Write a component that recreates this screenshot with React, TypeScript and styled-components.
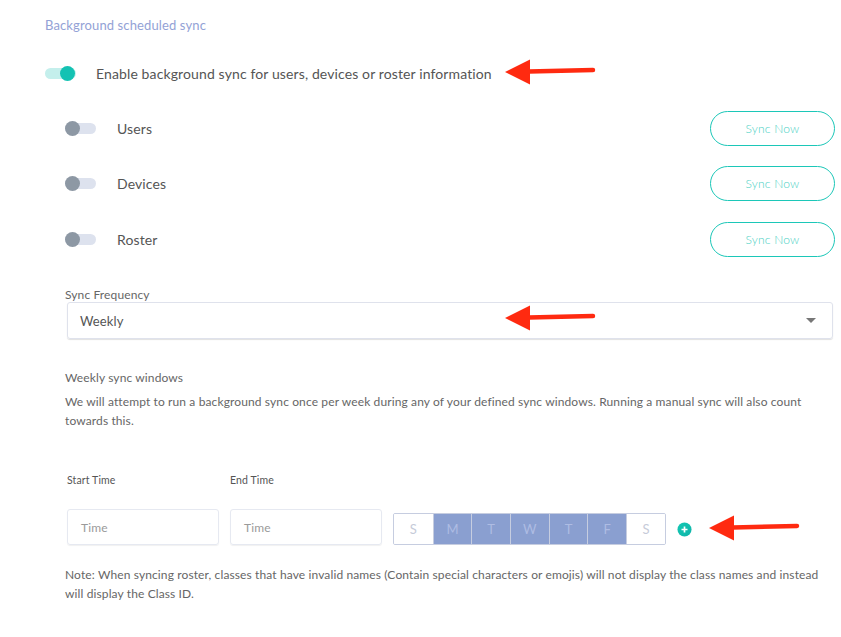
import React from "react";
import styled, { createGlobalStyle } from "styled-components";

const Global = createGlobalStyle`
  html, body { margin: 0; padding: 0; background: #fff; }
  body { font-family: "Lato", "Open Sans", sans-serif; color: #555; letter-spacing: 0.12px; }
  * { box-sizing: border-box; }
`;

const Page = styled.div`
  position: relative;
  width: 841px;
  height: 637px;
  padding: 17px 0 0 45px;
`;

const Heading = styled.div`
  font-size: 13px;
  color: #93a2d6;
  height: 16px;
  line-height: 16px;
`;

const MainRow = styled.div`
  display: flex;
  align-items: center;
  margin-top: 24px;
  height: 32px;
  gap: 20px;
`;

const MainLabel = styled.div`
  font-size: 14px;
  color: #555;
`;

const Track = styled.div<{ $on?: boolean }>`
  position: relative;
  width: 31px;
  height: 11px;
  border-radius: 6px;
  background: ${(p) => (p.$on ? "#c4efec" : "#dde2ee")};
  flex: none;
`;

const Knob = styled.div<{ $on?: boolean }>`
  position: absolute;
  top: -2px;
  left: ${(p) => (p.$on ? "15px" : "0px")};
  width: 15px;
  height: 15px;
  border-radius: 50%;
  background: ${(p) => (p.$on ? "#14c2b3" : "#8d98a4")};
`;

const SubList = styled.div`
  display: flex;
  flex-direction: column;
  gap: 21.5px;
  margin-top: 22px;
  padding-left: 20px;
  width: 790px;
`;

const SubRow = styled.div`
  display: flex;
  align-items: center;
  height: 34px;
`;

const SubLabel = styled.div`
  margin-left: 21px;
  font-size: 14px;
  color: #555;
  flex: 1;
`;

const SyncButton = styled.button`
  width: 125px;
  height: 35px;
  border-radius: 18px;
  border: 1px solid #1cc7b8;
  background: #fff;
  color: #46cfc3;
  font-family: "Lato", sans-serif;
  font-weight: 300;
  font-size: 12px;
  letter-spacing: 0.2px;
  cursor: pointer;
`;

const FreqBlock = styled.div`
  margin-top: 32px;
  padding-left: 20px;
`;

const SmallLabel = styled.div`
  font-size: 12px;
  color: #666;
  line-height: 14px;
`;

const SelectBox = styled.div`
  margin-top: 0px;
  margin-left: 2px;
  width: 766px;
  height: 37px;
  border: 1px solid #dfe2ec;
  border-radius: 3px;
  box-shadow: 0 1px 1px rgba(0, 0, 0, 0.12);
  display: flex;
  align-items: center;
  justify-content: space-between;
  padding: 0 16px 0 12px;
  font-size: 13px;
  color: #555;
`;

const Caret = styled.div`
  width: 0;
  height: 0;
  border-left: 5px solid transparent;
  border-right: 5px solid transparent;
  border-top: 5px solid #777;
`;

const WindowsBlock = styled.div`
  margin-top: 32px;
  padding-left: 20px;
  width: 790px;
`;

const Paragraph = styled.p`
  margin: 7px 0 0;
  font-size: 12px;
  line-height: 19px;
  color: #666;
`;

const TimeGrid = styled.div`
  margin-top: 44px;
  padding-left: 22px;
  display: flex;
  align-items: flex-end;
  gap: 11px;
`;

const TimeField = styled.div`
  display: flex;
  flex-direction: column;
  gap: 22px;
`;

const TinyLabel = styled.div`
  font-size: 10.5px;
  color: #555;
  height: 13px;
`;

const TimeInput = styled.div`
  width: 152px;
  height: 36px;
  border: 1px solid #e6e9f1;
  border-radius: 3px;
  box-shadow: 0 1px 1px rgba(0, 0, 0, 0.06);
  display: flex;
  align-items: center;
  padding-left: 13px;
  font-size: 12px;
  color: #9a9a9a;
`;

const Days = styled.div`
  display: flex;
  height: 32px;
  border: 1px solid #c6cde0;
  border-radius: 2px;
  overflow: hidden;
`;

const Day = styled.div<{ $on?: boolean }>`
  width: 38.7px;
  display: flex;
  align-items: center;
  justify-content: center;
  font-size: 13px;
  color: ${(p) => (p.$on ? "#aebce3" : "#c6cbd9")};
  background: ${(p) => (p.$on ? "#8a9fd0" : "#fff")};
  border-left: 1px solid #c6cde0;
  &:first-child { border-left: none; }
`;

const AddWrap = styled.div`
  height: 32px;
  display: flex;
  align-items: center;
`;

const Note = styled.p`
  margin: 20px 0 0;
  padding-left: 20px;
  width: 790px;
  font-size: 12px;
  line-height: 19px;
  color: #666;
`;

const Arrow = styled.svg<{ $x: number; $y: number }>`
  position: absolute;
  left: ${(p) => p.$x}px;
  top: ${(p) => p.$y}px;
`;

const RedArrow = ({ x, y }: { x: number; y: number }) => (
  <Arrow $x={x} $y={y} width="92" height="26" viewBox="0 0 92 26">
    <line x1="24" y1="12.5" x2="88" y2="11" stroke="#ff2a10" strokeWidth="4.5" strokeLinecap="round" />
    <polygon points="0,13 25,0.5 25,25.5" fill="#ff2a10" />
  </Arrow>
);

const Toggle = ({ on }: { on?: boolean }) => (
  <Track $on={on}>
    <Knob $on={on} />
  </Track>
);

const days = [
  { d: "S", on: false },
  { d: "M", on: true },
  { d: "T", on: true },
  { d: "W", on: true },
  { d: "T", on: true },
  { d: "F", on: true },
  { d: "S", on: false },
];

export default function App() {
  return (
    <Page>
      <Global />
      <Heading>Background scheduled sync</Heading>
      <MainRow>
        <Toggle on />
        <MainLabel>Enable background sync for users, devices or roster information</MainLabel>
      </MainRow>
      <SubList>
        {["Users", "Devices", "Roster"].map((l) => (
          <SubRow key={l}>
            <Toggle />
            <SubLabel>{l}</SubLabel>
            <SyncButton>Sync Now</SyncButton>
          </SubRow>
        ))}
      </SubList>
      <FreqBlock>
        <SmallLabel>Sync Frequency</SmallLabel>
        <SelectBox>
          <span>Weekly</span>
          <Caret />
        </SelectBox>
      </FreqBlock>
      <WindowsBlock>
        <SmallLabel>Weekly sync windows</SmallLabel>
        <Paragraph>
          We will attempt to run a background sync once per week during any of your defined sync windows. Running a
          manual sync will also count towards this.
        </Paragraph>
      </WindowsBlock>
      <TimeGrid>
        <TimeField>
          <TinyLabel>Start Time</TinyLabel>
          <TimeInput>Time</TimeInput>
        </TimeField>
        <TimeField>
          <TinyLabel>End Time</TinyLabel>
          <TimeInput>Time</TimeInput>
        </TimeField>
        <Days>
          {days.map((x, i) => (
            <Day key={i} $on={x.on}>
              {x.d}
            </Day>
          ))}
        </Days>
        <AddWrap>
          <svg width="15" height="15" viewBox="0 0 16 16">
            <defs>
              <linearGradient id="g" x1="0" y1="0" x2="1" y2="1">
                <stop offset="0" stopColor="#13c9b4" />
                <stop offset="1" stopColor="#0fb3a8" />
              </linearGradient>
            </defs>
            <circle cx="8" cy="8" r="7.5" fill="url(#g)" />
            <path d="M8 4.8v6.4M4.8 8h6.4" stroke="#fff" strokeWidth="1.8" />
          </svg>
        </AddWrap>
      </TimeGrid>
      <Note>
        Note: When syncing roster, classes that have invalid names (Contain special characters or emojis) will not
        display the class names and instead will display the Class ID.
      </Note>
      <RedArrow x={505} y={59} />
      <RedArrow x={505} y={305} />
      <RedArrow x={709} y={515} />
    </Page>
  );
}
